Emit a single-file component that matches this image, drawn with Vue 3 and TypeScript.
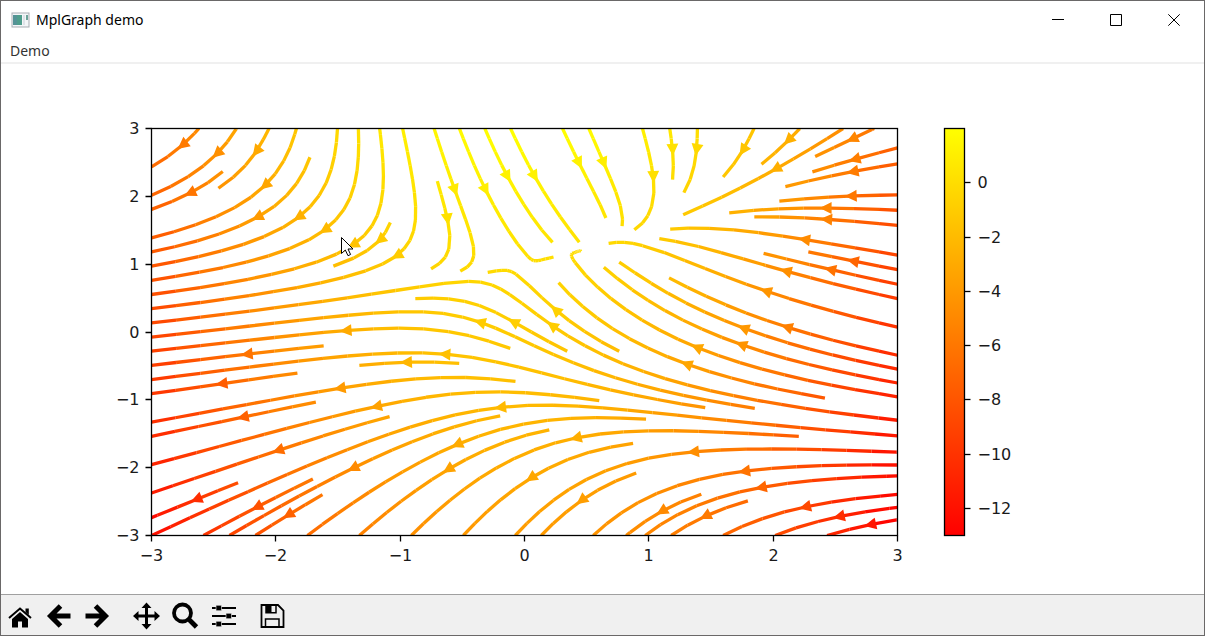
<script setup lang="ts">
type Point = [number, number]

interface Segment { x1: number; y1: number; x2: number; y2: number; color: string }
interface Arrow { points: string; color: string }

// Plot area inside the canvas, in drawing units
const LEFT = 150
const TOP = 64
const WIDTH = 746
const HEIGHT = 407
const RANGE = 3
const N = 100
const CELLS = 30
const LAST = N - 1
const POINT = 1.65

// Vector field sampled on an N x N grid
const U: number[][] = []
const V: number[][] = []
for (let j = 0; j < N; j++) {
  const y = -RANGE + (2 * RANGE * j) / LAST
  U.push([])
  V.push([])
  for (let i = 0; i < N; i++) {
    const x = -RANGE + (2 * RANGE * i) / LAST
    U[j].push(-1 - x * x + y)
    V[j].push(1 + x - y * y)
  }
}
const S = U.map((row, j) => row.map((u, i) => Math.hypot(u, V[j][i])))

function sample(a: number[][], x: number, y: number): number {
  const i = Math.floor(x)
  const j = Math.floor(y)
  const i2 = Math.min(i + 1, LAST)
  const j2 = Math.min(j + 1, LAST)
  const tx = x - i
  const ty = y - j
  const lower = a[j][i] * (1 - tx) + a[j][i2] * tx
  const upper = a[j2][i] * (1 - tx) + a[j2][i2] * tx
  return lower * (1 - ty) + upper * ty
}

const inside = (x: number, y: number): boolean => x >= 0 && x <= LAST && y >= 0 && y <= LAST

// Occupancy mask that keeps streamlines apart
const mask: boolean[][] = Array.from({ length: CELLS }, () => Array<boolean>(CELLS).fill(false))
let cell: Point = [-1, -1]
let visited: Point[] = []

const toCell = (x: number, y: number): Point => [
  Math.trunc((x * (CELLS - 1)) / N + 0.5),
  Math.trunc((y * (CELLS - 1)) / N + 0.5),
]

function enter(x: number, y: number): boolean {
  const [cx, cy] = toCell(x, y)
  if (cx < 0 || cy < 0 || cx >= CELLS || cy >= CELLS) return false
  if (cx === cell[0] && cy === cell[1]) return true
  if (mask[cy][cx]) return false
  mask[cy][cx] = true
  visited.push([cx, cy])
  cell = [cx, cy]
  return true
}

function direction(x: number, y: number, sign: number): Point | null {
  if (!inside(x, y)) return null
  const k = (sign * N) / sample(S, x, y)
  return [sample(U, x, y) * k, sample(V, x, y) * k]
}

function integrate(x0: number, y0: number, sign: number): { length: number; path: Point[] } {
  const maxError = 0.003
  const maxStep = 1 / CELLS
  const path: Point[] = []
  let step = maxStep
  let length = 0
  let x = x0
  let y = y0
  while (inside(x, y) && path.length < 2000) {
    path.push([x, y])
    const a = direction(x, y, sign)
    if (!a) break
    const b = direction(x + step * a[0], y + step * a[1], sign)
    if (!b) {
      // Finish with a straight step to the border
      const dx = a[0] < 0 ? x / -a[0] : (LAST - x) / a[0]
      const dy = a[1] < 0 ? y / -a[1] : (LAST - y) / a[1]
      const rest = Math.min(dx, dy)
      path.push([x + a[0] * rest, y + a[1] * rest])
      length += rest
      break
    }
    const mx = step * 0.5 * (a[0] + b[0])
    const my = step * 0.5 * (a[1] + b[1])
    const error = Math.hypot(mx - step * a[0], my - step * a[1]) / N
    if (error < maxError) {
      x += mx
      y += my
      if (!enter(x, y)) break
      if (length + step > 2) break
      length += step
    }
    step = error === 0 ? maxStep : Math.min(maxStep, 0.85 * step * Math.sqrt(maxError / error))
  }
  return { length, path }
}

// Seeds spiral inwards from the outer edge of the mask
function seeds(): Point[] {
  const out: Point[] = []
  let xFirst = 0
  let yFirst = 1
  let xLast = CELLS - 1
  let yLast = CELLS - 1
  let x = 0
  let y = 0
  let heading = 'right'
  for (let i = 0; i < CELLS * CELLS; i++) {
    out.push([x, y])
    if (heading === 'right') {
      x++
      if (x >= xLast) { xLast--; heading = 'up' }
    } else if (heading === 'up') {
      y++
      if (y >= yLast) { yLast--; heading = 'left' }
    } else if (heading === 'left') {
      x--
      if (x <= xFirst) { xFirst++; heading = 'down' }
    } else {
      y--
      if (y <= yFirst) { yFirst++; heading = 'right' }
    }
  }
  return out
}

const px = (x: number): number => LEFT + (x / LAST) * WIDTH
const py = (y: number): number => TOP + HEIGHT - (y / LAST) * HEIGHT
const round = (v: number): number => Math.round(v * 100) / 100

// Colour by the horizontal component, from red at -13 to yellow at 2
function autumn(gx: number, gy: number): string {
  const t = Math.min(1, Math.max(0, (sample(U, gx, gy) + 13) / 15))
  return `rgb(255 ${Math.round(t * 255)} 0)`
}

const segments: Segment[] = []
const arrows: Arrow[] = []

for (const [sx, sy] of seeds()) {
  const gx = (sx * N) / (CELLS - 1)
  const gy = (sy * N) / (CELLS - 1)
  if (mask[sy][sx] || !inside(gx, gy)) continue
  cell = [sx, sy]
  mask[sy][sx] = true
  visited = [[sx, sy]]
  const back = integrate(gx, gy, -1)
  cell = [sx, sy]
  const ahead = integrate(gx, gy, 1)
  if (back.length + ahead.length <= 0.1) {
    for (const [cx, cy] of visited) mask[cy][cx] = false
    continue
  }
  const line = [...back.path.reverse(), ...ahead.path.slice(1)]
  if (line.length < 2) continue
  const sums: number[] = []
  let total = 0
  for (let i = 0; i < line.length - 1; i++) {
    const [ax, ay] = line[i]
    const [bx, by] = line[i + 1]
    segments.push({
      x1: round(px(ax)), y1: round(py(ay)), x2: round(px(bx)), y2: round(py(by)),
      color: autumn(ax, ay),
    })
    total += Math.hypot(bx - ax, by - ay)
    sums.push(total)
  }
  const n = sums.findIndex((s) => s >= total / 2)
  const [tx, ty] = line[n]
  const x1 = px(tx)
  const y1 = py(ty)
  const x2 = (x1 + px(line[n + 1][0])) / 2
  const y2 = (y1 + py(line[n + 1][1])) / 2
  const d = Math.hypot(x2 - x1, y2 - y1) || 1
  const ux = (x2 - x1) / d
  const uy = (y2 - y1) / d
  // The tip steps back by the end gap and by the mitre of the outline
  const inset = 2 * POINT + POINT / 0.447
  const hx = x2 - ux * inset
  const hy = y2 - uy * inset
  const bx = hx - ux * 4 * POINT
  const by = hy - uy * 4 * POINT
  const w = 2 * POINT
  arrows.push({
    points: [[bx - uy * w, by + ux * w], [hx, hy], [bx + uy * w, by - ux * w]]
      .map((p) => p.map(round).join(',')).join(' '),
    color: autumn(tx, ty),
  })
}

const label = (v: number): string => (v < 0 ? `\u2212${-v}` : `${v}`)
const axisTicks = [-3, -2, -1, 0, 1, 2, 3].map((v) => ({
  text: label(v),
  x: Math.round(LEFT + ((v + 3) / 6) * WIDTH),
  y: Math.round(TOP + ((3 - v) / 6) * HEIGHT),
}))
const barTicks = [0, -2, -4, -6, -8, -10, -12].map((v) => ({
  text: label(v),
  y: Math.round(TOP + ((2 - v) / 15) * HEIGHT),
}))
</script>

<template>
  <div class="window">
    <header class="titlebar">
      <svg class="app-icon" viewBox="0 0 20 16" aria-hidden="true">
        <rect x="1" y="1" width="17" height="14" fill="#f4f6f8" stroke="#a9adb3" />
        <rect x="2" y="3" width="9" height="10" fill="#4f9d8c" />
        <rect x="2" y="3" width="4" height="10" fill="#5b8aa0" opacity=".5" />
        <rect x="12" y="3" width="2" height="10" fill="#dfe3e8" />
        <rect x="15" y="3" width="2" height="5" fill="#6da399" />
      </svg>
      <h1 class="title">MplGraph demo</h1>
      <div class="controls">
        <button type="button" aria-label="Minimize">
          <svg viewBox="0 0 12 12"><path d="M0 5.5H12" /></svg>
        </button>
        <button type="button" aria-label="Maximize">
          <svg viewBox="0 0 12 12"><path d="M.5 .5H11.5V11.5H.5Z" /></svg>
        </button>
        <button type="button" aria-label="Close">
          <svg viewBox="0 0 12 12"><path d="M.3 .3L11.7 11.7M11.7 .3L.3 11.7" /></svg>
        </button>
      </div>
    </header>

    <nav class="menubar">
      <button type="button">Demo</button>
    </nav>

    <main class="canvas">
      <svg class="figure" viewBox="0 0 1203 530" role="img" aria-label="Stream plot">
        <defs>
          <clipPath id="axes-clip">
            <rect :x="LEFT" :y="TOP" :width="WIDTH" :height="HEIGHT" />
          </clipPath>
          <linearGradient id="autumn" x1="0" y1="0" x2="0" y2="1">
            <stop offset="0" stop-color="#ffff00" />
            <stop offset="1" stop-color="#ff0000" />
          </linearGradient>
        </defs>
        <g transform="translate(.5 .5)">
          <g clip-path="url(#axes-clip)">
            <line
              v-for="(s, i) in segments" :key="i" class="stream"
              :x1="s.x1" :y1="s.y1" :x2="s.x2" :y2="s.y2" :stroke="s.color"
            />
            <polygon
              v-for="(a, i) in arrows" :key="i" class="stream"
              :points="a.points" :fill="a.color" :stroke="a.color"
            />
          </g>
          <rect class="spine" :x="LEFT" :y="TOP" :width="WIDTH" :height="HEIGHT" />
          <g v-for="t in axisTicks" :key="t.text">
            <path class="spine" :d="`M${t.x} ${TOP + HEIGHT}v6M${LEFT} ${t.y}h-6`" />
            <text class="tick" text-anchor="middle" :x="t.x" :y="TOP + HEIGHT + 25">{{ t.text }}</text>
            <text class="tick" text-anchor="end" :x="LEFT - 12" :y="t.y + 5">{{ t.text }}</text>
          </g>
          <rect x="943" :y="TOP" width="20" :height="HEIGHT" fill="url(#autumn)" stroke="#000" stroke-width="1.3" />
          <g v-for="t in barTicks" :key="t.text">
            <path class="spine" :d="`M963 ${t.y}h6`" />
            <text class="tick" x="976" :y="t.y + 5">{{ t.text }}</text>
          </g>
        </g>
        <path
          d="M340.5 173.5V189.5L344.3 186L347 191.7L349.6 190.5L347 185H352Z"
          fill="#fff" stroke="#000" stroke-width="1"
        />
      </svg>
    </main>

    <footer class="toolbar">
      <div class="group">
        <button type="button" aria-label="Home">
          <svg viewBox="0 0 28 28">
            <path d="M2 16L13 6.5L24 16" fill="none" stroke="#000" stroke-width="2" />
            <path d="M18.5 6.5H21.8V13L18.5 10Z" />
            <path d="M5 17L13 10L21 17V25.5H15V19.5H11V25.5H5Z" />
          </svg>
        </button>
        <button type="button" aria-label="Back">
          <svg viewBox="0 0 28 28">
            <path d="M14.5 4L4.5 14L14.5 24M5 14H24.5" fill="none" stroke="#000" stroke-width="5" />
          </svg>
        </button>
        <button type="button" aria-label="Forward">
          <svg viewBox="0 0 28 28">
            <path d="M10.5 4L20.5 14L10.5 24M20 14H.5" fill="none" stroke="#000" stroke-width="5" />
          </svg>
        </button>
      </div>
      <div class="group">
        <button type="button" aria-label="Pan">
          <svg viewBox="0 0 28 28">
            <path d="M13.5 3V25M3 14H25" fill="none" stroke="#000" stroke-width="3" />
            <path d="M13.5 .5L18.5 6H8.5ZM13.5 27.5L18.5 22H8.5ZM0 14L5.5 9V19ZM27 14L21.5 9V19Z" />
          </svg>
        </button>
        <button type="button" aria-label="Zoom">
          <svg viewBox="0 0 28 28">
            <circle cx="10.5" cy="11" r="8.5" fill="none" stroke="#000" stroke-width="3.8" />
            <path d="M17 17.5L24.5 25" fill="none" stroke="#000" stroke-width="4.8" />
          </svg>
        </button>
        <button type="button" aria-label="Configure subplots">
          <svg viewBox="0 0 28 28">
            <path d="M1 6H25M1 14H25M1 22H25" fill="none" stroke="#000" stroke-width="1.8" />
            <path d="M5 3.300H10.5V8.7H5ZM15 11.3H20.5V16.7H15ZM5 19.3H10.5V24.7H5Z" stroke="#f0f0f0" stroke-width=".6" />
          </svg>
        </button>
      </div>
      <div class="group">
        <button type="button" aria-label="Save">
          <svg viewBox="0 0 28 28">
            <path d="M2.5 3H19L24.5 8.5V25H2.5Z" fill="none" stroke="#000" stroke-width="1.8" />
            <path d="M7 3V10.8H17V3M6.5 25V17H20V25" fill="none" stroke="#000" stroke-width="1.5" />
            <path d="M7 3H12.5V10.8H7Z" />
          </svg>
        </button>
      </div>
    </footer>
  </div>
</template>

<style>
body {
  margin: 0;
}
</style>

<style scoped>
.window {
  box-sizing: border-box;
  min-height: 100vh;
  display: flex;
  flex-direction: column;
  border: 1px solid #6a6868;
  background: #fff;
  font-family: "Noto Sans", "Open Sans", sans-serif;
  color: #000;
}

button {
  display: flex;
  align-items: center;
  justify-content: center;
  padding: 0;
  border: 0;
  background: transparent;
  font: inherit;
  color: inherit;
}

.titlebar {
  display: flex;
  align-items: center;
  height: 38px;
}

.app-icon {
  width: 20px;
  height: 16px;
  margin: 0 5px 0 10px;
}

.title {
  flex: 1;
  margin: 0;
  font-size: 14px;
  font-weight: 400;
  line-height: 20px;
}

.controls {
  display: flex;
  height: 100%;
  padding-right: 1px;
}

.controls button {
  width: 58px;
}

.controls svg {
  width: 12px;
  height: 12px;
  fill: none;
  stroke: #000;
}

.menubar {
  display: flex;
  box-sizing: border-box;
  height: 25px;
  border-bottom: 2px solid #f0f0f0;
}

.menubar button {
  padding: 0 9px;
  font-size: 14px;
  color: #333;
}

.canvas {
  flex: 1;
  display: flex;
}

.figure {
  flex: 1;
  min-width: 0;
}

.stream {
  stroke-width: 3.3;
}

.spine {
  fill: none;
  stroke: #000;
  stroke-width: 1.3;
}

.tick {
  font-family: "DejaVu Sans", sans-serif;
  font-size: 16px;
  fill: #1a1a1a;
}

.toolbar {
  display: flex;
  gap: 9px;
  height: 40px;
  border-top: 1px solid #a0a0a0;
  background: #f0f0f0;
}

.group {
  display: flex;
}

.toolbar button {
  width: 39px;
  padding-top: 2px;
}

.toolbar svg {
  width: 28px;
  height: 28px;
}
</style>
